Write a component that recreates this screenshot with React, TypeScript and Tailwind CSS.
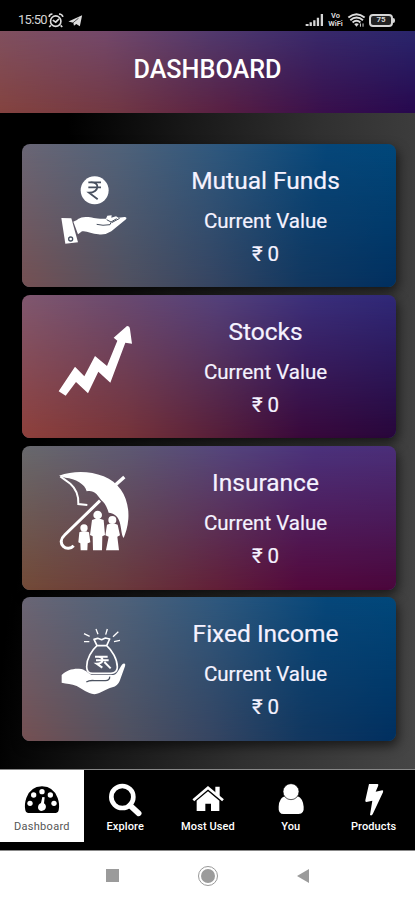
import type { ReactNode } from "react";

function HandCoin() {
  return (
    <svg viewBox="135 41 240 429" className="h-[143px] w-20" fill="#fff">
      <circle cx="254" cy="180" r="42" />
      <path d="M235 156H273M235 171H273M240 156C272 153 268 187 237 187L263 207" fill="none" stroke="#48505f" strokeWidth="5.5" />
      <path d="M154 263L184 264L204 336L166 340Z" />
      <circle cx="182" cy="326" r="6" fill="none" stroke="#48505f" strokeWidth="4" />
      <path d="M190 274C203 270 207 259 230 260C246 260 260 267 288 265L292 256L305 255L304 262L318 258L325 262L344 260Q352 261 348 267L304 303Q286 315 265 312C246 310 228 300 216 303L204 312Z" />
      <path d="M260 282Q278 287 300 283L303 276M290 268L303 275L320 265M305 277L329 264" fill="none" stroke="#48505f" strokeWidth="3" />
    </svg>
  );
}

function RisingArrow() {
  return (
    <svg viewBox="135 13 240 429" className="h-[143px] w-20" fill="#fff">
      <path d="M146 302L195 228L223 257L255 196L291 226L322 150L311 141L351 106Q359 106 360 116L366 159L346 156L301 276L265 243L234 308L198 274L167 315Z" />
    </svg>
  );
}

function UmbrellaFamily() {
  return (
    <svg viewBox="135 17 240 429" className="h-[143px] w-20" fill="#fff">
      <path d="M147 106C190 91 238 91 281 108C333 128 359 180 355 236C353 260 347 278 341 293C334 285 334 262 329 245C324 226 310 219 296 217C290 197 282 185 274 180L260 162C250 151 238 151 230 153C226 131 196 115 166 112Z" />
      <path d="M151 108L181 130Q207 153 205 191L232 194" fill="none" stroke="#fff" strokeWidth="6" />
      <path d="M316 134L343 110" stroke="#fff" strokeWidth="10" />
      <path d="M270 181L164 284C151 296 151 309 160 318C169 327 183 325 191 316" fill="none" stroke="#fff" strokeWidth="9" />
      <circle cx="222" cy="263" r="11" />
      <path d="M208 276Q222 270 237 276L241 306L233 309L232 330H212L211 309L205 306Z" />
      <circle cx="263" cy="224" r="13" />
      <path d="M246 239Q263 232 281 239L285 284L277 288L276 330H249L248 288L240 284Z" />
      <circle cx="307" cy="239" r="12" />
      <path d="M291 253Q307 246 323 253L330 285L322 289L327 330H288L296 289L286 285Z" />
    </svg>
  );
}

function HandMoneyBag() {
  return (
    <svg viewBox="135 20 240 429" className="h-[143px] w-20" fill="#fff">
      <path d="M222 130L239 138M222 154H238M258 116L264 132M292 116L287 133M325 124L309 139M330 150L312 154" stroke="#fff" strokeWidth="4" />
      <path d="M252 147L263 144L275 148L286 143L299 146L290 166C306 180 322 207 322 230C322 243 316 248 303 249H248C235 249 230 242 230 229C230 205 245 180 261 166ZM260 166H291" fill="none" stroke="#fff" strokeWidth="5" strokeLinejoin="round" />
      <path d="M255 199H293M258 210H296M265 199C282 199 283 220 260 220L277 232M283 215L302 234" fill="none" stroke="#fff" strokeWidth="6" />
      <path d="M155 254C169 240 187 234 207 235C227 236 232 248 246 254H310C325 251 330 226 339 220Q348 217 345 228L329 272Q323 287 307 291C286 296 275 309 253 312C232 308 218 297 200 287C184 280 170 281 155 277Z" />
      <path d="M229 275Q239 269 254 271H286Q300 270 299 259" fill="none" stroke="#4c5361" strokeWidth="4" />
    </svg>
  );
}

type Holding = { name: string; top: string; bottom: string; icon: ReactNode };

const blueTop = "bg-[linear-gradient(97deg,#6a6675_0%,#50627a_25%,#2e587e_50%,#06477a_78%,#00487b_100%)]";
const blueBottom = "bg-[linear-gradient(90deg,#755052_0%,#50505f_28%,#374561_50%,#12375f_75%,#002f5f_100%)]";

const holdings: Holding[] = [
  { name: "Mutual Funds", top: blueTop, bottom: blueBottom, icon: <HandCoin /> },
  {
    name: "Stocks",
    top: "bg-[linear-gradient(97deg,#80586f_0%,#6a4a70_25%,#54417b_50%,#3a2f7b_75%,#2d2777_100%)]",
    bottom: "bg-[linear-gradient(90deg,#8e403b_0%,#763338_28%,#571e38_52%,#39083a_75%,#28063a_100%)]",
    icon: <RisingArrow />,
  },
  {
    name: "Insurance",
    top: "bg-[linear-gradient(97deg,#68696d_0%,#5d5873_28%,#54457c_52%,#4b327c_75%,#4a2e79_100%)]",
    bottom: "bg-[linear-gradient(90deg,#734a37_0%,#6b3b3b_25%,#621f37_52%,#53083b_75%,#4a063b_100%)]",
    icon: <UmbrellaFamily />,
  },
  { name: "Fixed Income", top: blueTop, bottom: blueBottom, icon: <HandMoneyBag /> },
];

function HoldingCard({ name, top, bottom, icon }: Holding) {
  return (
    <section className={`relative flex h-[143.5px] shrink-0 overflow-hidden rounded-lg shadow-[2px_5px_12px_rgba(0,0,0,0.6)] ${top}`}>
      <div className={`absolute inset-0 [mask-image:linear-gradient(to_bottom,transparent,black)] ${bottom}`} />
      <div className="relative flex w-[146px] justify-center">{icon}</div>
      <div className="relative flex w-[195px] flex-col items-center pt-[21px] text-center text-[#f5f2ff] [-webkit-text-stroke:0.2px_#f5f2ff]">
        <h2 className="whitespace-nowrap text-[24.5px] leading-8">{name}</h2>
        <p className="mt-[8px] whitespace-nowrap text-[20.5px] leading-8">Current Value</p>
        <p className="mt-px whitespace-nowrap text-[20.5px] leading-8">₹ 0</p>
      </div>
    </section>
  );
}

function StatusBar() {
  return (
    <div className="flex h-[31px] items-center justify-between bg-black pl-[18px] pr-5 pt-[9px] text-[#d5d5d5]">
      <div className="flex items-center">
        <span className="w-[29px] text-[13px] leading-4 tracking-[-0.7px]">15:50</span>
        <svg viewBox="144 36 110 46" className="h-[15px] w-[37px]" fill="none" stroke="#ddd" strokeWidth="5">
          <circle cx="169" cy="61" r="16" />
          <path d="M149 48Q149 39 159 39M179 39Q189 39 191 48M154 74L149 79M184 74L189 79M160 58L169 64L179 54" />
          <path d="M208 62L250 43L243 77L232 70L225 75L223 66Z" fill="#ddd" stroke="none" />
          <path d="M222 66L239 52" stroke="#000" strokeWidth="2" />
        </svg>
      </div>
      <div className="flex items-center gap-[3px]">
        <svg viewBox="286 38 58 42" className="h-[14px] w-[19px]" fill="#d5d5d5">
          <path d="M288 71H297V77H288ZM300 66H307V77H300ZM311 60H318V77H311ZM322 52H329V77H322ZM334 41H341V77H334Z" />
        </svg>
        <div className="flex w-[17px] flex-col text-center text-[7.5px] font-bold leading-none">
          <span className="block h-2">Vo</span>
          <span className="block h-2">WiFi</span>
        </div>
        <svg viewBox="412 36 56 46" className="h-[15px] w-[19px]" fill="none" stroke="#ddd" strokeWidth="6">
          <path d="M415 50Q440 30 465 50M421 58Q440 42 460 58M428 65Q440 55 452 65" />
          <path d="M433 70Q440 65 447 70L440 78Z" fill="#ddd" stroke="none" />
          <path d="M452 68V78M460 68V78" strokeWidth="3" />
        </svg>
        <div className="flex items-center">
          <div className="flex h-[13px] w-[24px] items-center justify-center rounded-[4px] border-2 border-[#d5d5d5] bg-[#222] text-[8px] font-bold leading-none">75</div>
          <div className="h-[5px] w-[2px] rounded-r bg-[#d5d5d5]" />
        </div>
      </div>
    </div>
  );
}

const tabs: { label: string; viewBox: string; text: string; drawing: ReactNode }[] = [
  {
    label: "Dashboard",
    viewBox: "66 66 120 108",
    text: "text-[11px] text-[#555] tracking-[0.3px]",
    drawing: (
      <>
        <path d="M76 151Q72 134 79 114Q91 80 126 79Q161 80 173 114Q180 134 176 151Q175 159 168 159H84Q77 159 76 151Z" fill="#000" />
        <circle cx="90" cy="130" r="8" />
        <circle cx="101" cy="105" r="8" />
        <circle cx="126" cy="95" r="8" />
        <circle cx="151" cy="105" r="8" />
        <circle cx="162" cy="130" r="8" />
        <path d="M127 111L134 112L132 130Q140 136 137 145Q134 153 125 153Q115 151 114 143Q114 132 123 129Z" />
      </>
    ),
  },
  {
    label: "Explore",
    viewBox: "315 66 120 108",
    text: "text-[11px] font-medium tracking-[0.1px] text-white",
    drawing: (
      <>
        <circle cx="367" cy="111" r="33" fill="none" stroke="#fff" strokeWidth="14" />
        <path d="M390 136L416 160" stroke="#fff" strokeWidth="17" strokeLinecap="round" />
      </>
    ),
  },
  {
    label: "Most Used",
    viewBox: "564 66 120 108",
    text: "text-[11px] font-medium tracking-[0.1px] text-white",
    drawing: (
      <>
        <path d="M580 121L624 83L669 121" fill="none" stroke="#fff" strokeWidth="8" />
        <path d="M646 80H659V111L646 99ZM590 122L624 94L658 122V153H633V131H616V153H590Z" />
      </>
    ),
  },
  {
    label: "You",
    viewBox: "192 66 120 108",
    text: "text-[11px] font-medium tracking-[0.1px] text-white",
    drawing: (
      <>
        <path d="M233 109Q217 113 215 140Q213 162 230 162H275Q292 161 290 140Q287 114 272 109Z" />
        <circle cx="252" cy="95" r="24" stroke="#000" strokeWidth="2" />
      </>
    ),
  },
  {
    label: "Products",
    viewBox: "441 66 120 108",
    text: "text-[11px] font-medium tracking-[0.1px] text-white",
    drawing: <path d="M486 72H512Q516 73 513 79L506 95L526 91Q530 91 528 97L497 163Q494 168 489 165L496 122L478 126Q474 126 475 121Z" />,
  },
];

function TabBar() {
  return (
    <nav className="flex h-[82px] shrink-0 border-y border-[#888] bg-black">
      {tabs.map((tab, index) => (
        <div key={tab.label} className={`flex h-[72px] flex-col items-center pt-[12px] ${index === 0 ? "w-[84px] bg-white" : "w-[83px]"}`}>
          <svg viewBox={tab.viewBox} className="h-9 w-10" fill="#fff">{tab.drawing}</svg>
          <span className={`mt-px whitespace-nowrap leading-4 ${tab.text}`}>{tab.label}</span>
        </div>
      ))}
    </nav>
  );
}

export default function App() {
  return (
    <div className="flex h-[900px] w-[415px] flex-col overflow-hidden bg-black font-[Roboto,'Noto_Sans',sans-serif]">
      <StatusBar />
      <header className="relative flex h-[82px] shrink-0 items-center justify-center bg-[linear-gradient(97deg,#80505f_0%,#73486a_25%,#51396d_50%,#39296b_75%,#28256c_100%)]">
        <div className="absolute inset-0 bg-[linear-gradient(90deg,#84433f_0%,#713743_28%,#571e42_55%,#390f4b_78%,#27084e_100%)] [mask-image:linear-gradient(to_bottom,transparent,black)]" />
        <h1 className="relative pb-[5px] text-[25.2px] font-medium leading-8 text-white">DASHBOARD</h1>
      </header>
      <main className="flex h-[656px] shrink-0 flex-col gap-[7.8px] bg-[linear-gradient(97deg,#000_0%,#000_14%,#181818_38%,#303030_65%,#464646_100%)] pl-[22px] pr-[19px] pt-[30.5px]">
        {holdings.map((holding) => (
          <HoldingCard key={holding.name} {...holding} />
        ))}
      </main>
      <TabBar />
      <div className="flex flex-1 items-center justify-center gap-[79px] bg-white">
        <div className="size-[13px] bg-[#9b9b9b]" />
        <div className="flex size-5 items-center justify-center rounded-full border border-[#999]">
          <div className="size-[14px] rounded-full bg-[#9b9b9b]" />
        </div>
        <svg viewBox="0 0 13 14" className="h-[14px] w-[13px]" fill="#9b9b9b"><path d="M0 7L12 0V14Z" /></svg>
      </div>
    </div>
  );
}
